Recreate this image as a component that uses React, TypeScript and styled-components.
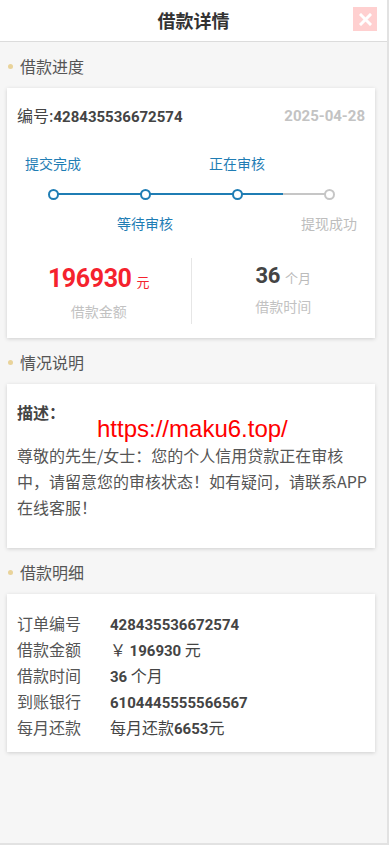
import React from "react";
import styled, { createGlobalStyle } from "styled-components";

const Global = createGlobalStyle`
  html, body { margin: 0; padding: 0; background: #ececec; }
  body { font-family: "Noto Sans CJK SC", "Noto Sans", sans-serif; }
  * { box-sizing: border-box; }
`;

const Page = styled.div`
  width: 389px;
  min-height: 845px;
  background: #f6f6f6;
  border-right: 2px solid #e2e2e2;
  border-bottom: 2px solid #e2e2e2;
  display: flex;
  flex-direction: column;
`;

const Header = styled.header`
  height: 42px;
  background: #fff;
  border-bottom: 1px solid #dcdcdc;
  display: flex;
  align-items: center;
  justify-content: center;
  position: relative;
`;

const Title = styled.h1`
  margin: 0 0 1px;
  font-size: 18px;
  font-weight: 700;
  color: #333;
  line-height: 22px;
`;

const CloseBtn = styled.button`
  position: absolute;
  right: 10px;
  top: 7px;
  width: 24px;
  height: 24px;
  border: 0;
  padding: 0;
  background: #ffd0d0;
  display: flex;
  align-items: center;
  justify-content: center;
`;

const Body = styled.main`
  display: flex;
  flex-direction: column;
`;

const SectionTitle = styled.div`
  display: flex;
  align-items: center;
  gap: 7px;
  padding: 14px 0 12px 8px;
  font-size: 16px;
  line-height: 20px;
  height: 46px;
  color: #555;
  &::before {
    content: "";
    width: 5px;
    height: 5px;
    border-radius: 50%;
    background: #e9d39a;
  }
`;

const Card = styled.section<{ $pt?: number; $pb?: number }>`
  margin: 0 12px 0 7px;
  background: #fff;
  box-shadow: 0 1px 4px rgba(0, 0, 0, 0.16);
  padding-top: ${(p) => p.$pt ?? 0}px;
  padding-bottom: ${(p) => p.$pb ?? 0}px;
  position: relative;
`;

const NumRow = styled.div`
  display: flex;
  justify-content: space-between;
  align-items: center;
  padding: 0 10px;
  height: 20px;
  line-height: 20px;
`;

const OrderNo = styled.span`
  font-size: 16px;
  color: #444;
  b {
    font-family: "Roboto", sans-serif;
    font-size: 15px;
    font-weight: 700;
  }
`;

const DateText = styled.span`
  font-family: "Roboto", sans-serif;
  font-weight: 700;
  font-size: 15px;
  color: #c3c3c3;
`;

const Steps = styled.div`
  display: grid;
  grid-template-columns: repeat(4, 1fr);
  margin-top: 27px;
`;

const Step = styled.div`
  display: grid;
  grid-template-rows: 20px 20px 20px;
  row-gap: 10px;
  justify-items: center;
  font-size: 14px;
  line-height: 20px;
`;

const Slot = styled.div`
  height: 20px;
  line-height: 20px;
  font-size: 14px;
`;

const StepLabel = styled.span<{ $done: boolean }>`
  display: block;
  font-size: 14px;
  line-height: 20px;
  color: ${(p) => (p.$done ? "#1f7db4" : "#bdbdbd")};
  white-space: nowrap;
`;

const Track = styled.div`
  position: relative;
  width: 100%;
  height: 20px;
  margin-top: 1px;
  display: flex;
  align-items: center;
  justify-content: center;
`;

const Half = styled.span<{ $side: "left" | "right"; $color: string }>`
  position: absolute;
  top: 9px;
  height: 2px;
  width: 50%;
  ${(p) => (p.$side === "left" ? "left: 0;" : "right: 0;")}
  background: ${(p) => p.$color};
`;

const Node = styled.span<{ $done: boolean }>`
  position: relative;
  width: 11px;
  height: 11px;
  border-radius: 50%;
  background: #fff;
  border: 2px solid ${(p) => (p.$done ? "#1f7db4" : "#c6c6c6")};
`;

const Stats = styled.div`
  display: grid;
  grid-template-columns: 1fr 1px 1fr;
  margin-top: 25px;
  height: 66px;
`;

const Divider = styled.div`
  background: #e6e6e6;
`;

const Stat = styled.div<{ $top: number; $gap: number }>`
  display: flex;
  flex-direction: column;
  align-items: center;
  padding-top: ${(p) => p.$top}px;
  gap: ${(p) => p.$gap}px;
`;

const StatValue = styled.div<{ $color: string; $size: number }>`
  line-height: 30px;
  height: 30px;
  display: flex;
  align-items: baseline;
  gap: 5px;
  color: ${(p) => p.$color};
  b {
    font-family: "Roboto", sans-serif;
    font-weight: 700;
    font-size: ${(p) => p.$size}px;
    letter-spacing: -0.4px;
  }
`;

const Unit = styled.span<{ $color: string }>`
  font-size: 13px;
  color: ${(p) => p.$color};
`;

const StatLabel = styled.div`
  font-size: 14px;
  line-height: 20px;
  color: #c2c2c2;
`;

const DescTitle = styled.div`
  padding: 0 10px;
  font-size: 16px;
  line-height: 20px;
  height: 20px;
  font-weight: 700;
  color: #444;
`;

const DescText = styled.p`
  margin: 20px 0 0;
  padding: 0 10px;
  font-size: 16px;
  line-height: 26px;
  color: #555;
  white-space: nowrap;
`;

const Watermark = styled.span`
  position: absolute;
  left: 90px;
  top: 31px;
  font-family: "Liberation Sans", Arial, sans-serif;
  font-size: 24px;
  line-height: 28px;
  color: #ff0000;
`;

const Rows = styled.dl`
  margin: 0;
  padding: 0 10px;
  display: grid;
  grid-template-columns: 93px 1fr;
  grid-auto-rows: 26px;
  line-height: 26px;
  font-size: 16px;
  color: #555;
  dt, dd { margin: 0; }
`;

const RowValue = styled.dd`
  color: #444;
  b {
    font-family: "Roboto", sans-serif;
    font-weight: 700;
    font-size: 15px;
  }
`;

type StepData = { label: string; pos: "top" | "bottom"; done: boolean; left?: string; right?: string };

const BLUE = "#1f7db4";
const GRAY = "#c6c6c6";

const steps: StepData[] = [
  { label: "提交完成", pos: "top", done: true, right: BLUE },
  { label: "等待审核", pos: "bottom", done: true, left: BLUE, right: BLUE },
  { label: "正在审核", pos: "top", done: true, left: BLUE, right: BLUE },
  { label: "提现成功", pos: "bottom", done: false, left: GRAY },
];

const details: [string, React.ReactNode][] = [
  ["订单编号", <b>428435536672574</b>],
  ["借款金额", <>￥ <b>196930</b> 元</>],
  ["借款时间", <><b>36</b> 个月</>],
  ["到账银行", <b>6104445555566567</b>],
  ["每月还款", <>每月还款<b>6653</b>元</>],
];

export default function App() {
  return (
    <Page>
      <Global />
      <Header>
        <Title>借款详情</Title>
        <CloseBtn aria-label="关闭">
          <svg width="13" height="13" viewBox="0 0 13 13">
            <path d="M2 2 L11 11 M11 2 L2 11" stroke="#fff" strokeWidth="3" strokeLinecap="square" />
          </svg>
        </CloseBtn>
      </Header>
      <Body>
        <SectionTitle>借款进度</SectionTitle>
        <Card $pt={18} $pb={14}>
          <NumRow>
            <OrderNo>
              编号:<b>428435536672574</b>
            </OrderNo>
            <DateText>2025-04-28</DateText>
          </NumRow>
          <Steps>
            {steps.map((s) => (
              <Step key={s.label}>
                <Slot>{s.pos === "top" && <StepLabel $done={s.done}>{s.label}</StepLabel>}</Slot>
                <Track>
                  {s.left && <Half $side="left" $color={s.left} />}
                  {s.right && <Half $side="right" $color={s.right} />}
                  <Node $done={s.done} />
                </Track>
                <Slot>{s.pos === "bottom" && <StepLabel $done={s.done}>{s.label}</StepLabel>}</Slot>
              </Step>
            ))}
          </Steps>
          <Stats>
            <Stat $top={6} $gap={7}>
              <StatValue $color="#f5222d" $size={25}>
                <b>196930</b>
                <Unit $color="#f5222d">元</Unit>
              </StatValue>
              <StatLabel>借款金额</StatLabel>
            </Stat>
            <Divider />
            <Stat $top={3} $gap={5}>
              <StatValue $color="#444" $size={22}>
                <b>36</b>
                <Unit $color="#bbb">个月</Unit>
              </StatValue>
              <StatLabel>借款时间</StatLabel>
            </Stat>
          </Stats>
        </Card>

        <SectionTitle>情况说明</SectionTitle>
        <Card $pt={18} $pb={28}>
          <DescTitle>描述：</DescTitle>
          <DescText>
            尊敬的先生/女士：您的个人信用贷款正在审核
            <br />
            中，请留意您的审核状态！如有疑问，请联系APP
            <br />
            在线客服！
          </DescText>
          <Watermark>https://maku6.top/</Watermark>
        </Card>

        <SectionTitle>借款明细</SectionTitle>
        <Card $pt={16} $pb={12}>
          <Rows>
            {details.map(([k, v]) => (
              <React.Fragment key={k}>
                <dt>{k}</dt>
                <RowValue>{v}</RowValue>
              </React.Fragment>
            ))}
          </Rows>
        </Card>
      </Body>
    </Page>
  );
}
